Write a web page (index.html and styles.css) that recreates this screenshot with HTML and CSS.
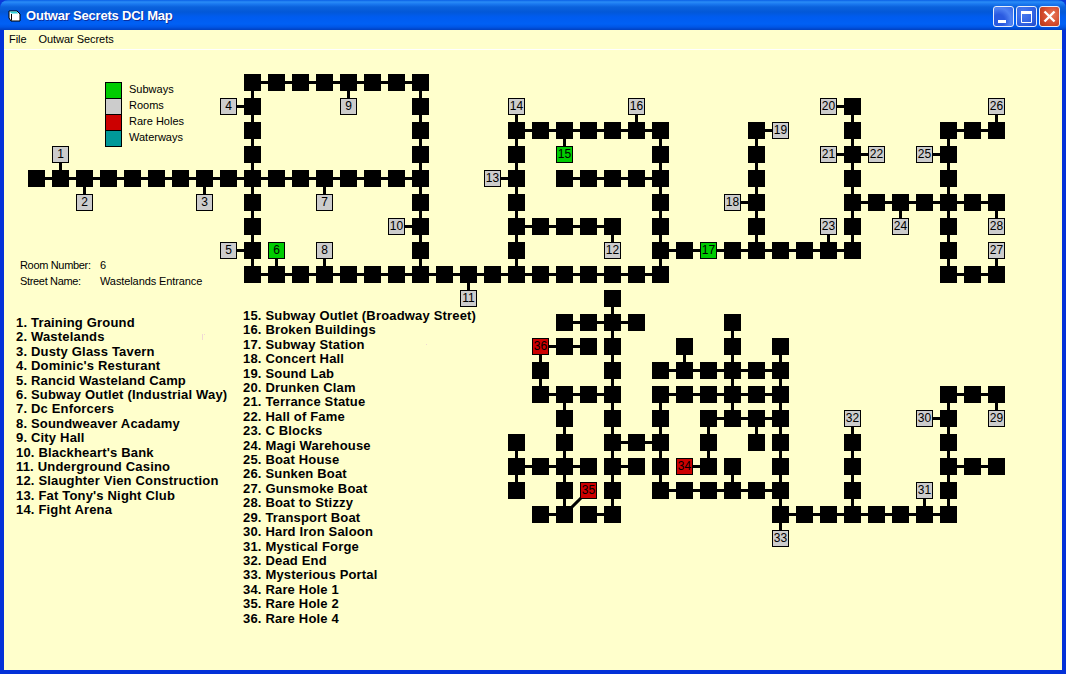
FILE: index.html
```html
<!DOCTYPE html>
<html lang="en">
<head>
<meta charset="utf-8">
<title>Outwar Secrets DCI Map</title>
<link rel="stylesheet" href="styles.css">
</head>
<body>
<div class="window">
  <header class="titlebar">
    <svg class="app-icon" width="13" height="12" viewBox="0 0 13 12">
      <path d="M1 1h8l3 3v7H3L1 8z" fill="#fff" stroke="#000"/>
      <path d="M1.500 1.500h7l2 2h-7z" fill="#2fd0d8"/>
      <path d="M3.500 4v6.500" stroke="#000"/>
    </svg>
    <span class="title">Outwar Secrets DCI Map</span>
    <div class="controls">
      <button class="ctl ctl-min" aria-label="Minimize"><svg width="19" height="19" viewBox="0 0 19 19"><path d="M4 13h8v3H4z" fill="#fff"/></svg></button>
      <button class="ctl ctl-max" aria-label="Maximize"><svg width="19" height="19" viewBox="0 0 19 19"><path d="M4.500 5.500h10v10h-10z" fill="none" stroke="#fff"/><path d="M4 4h11v3H4z" fill="#fff"/></svg></button>
      <button class="ctl ctl-close" aria-label="Close"><svg width="19" height="19" viewBox="0 0 19 19"><path d="M4.500 4.500l10 10M14.500 4.500l-10 10" stroke="#fff" stroke-width="2.400"/></svg></button>
    </div>
  </header>
  <nav class="menubar">
    <span class="menu-item">File</span>
    <span class="menu-item">Outwar Secrets</span>
  </nav>
  <main class="client">
    <svg id="map" class="map" width="1058" height="640" viewBox="4 30 1058 640"></svg>
    <div class="panel">
      <ul class="legend">
        <li class="legend-row"><span class="swatch sw-subway"></span>Subways</li>
        <li class="legend-row"><span class="swatch sw-room"></span>Rooms</li>
        <li class="legend-row"><span class="swatch sw-rare"></span>Rare Holes</li>
        <li class="legend-row"><span class="swatch sw-water"></span>Waterways</li>
      </ul>
      <dl class="info">
        <div class="info-row"><dt>Room Number:</dt><dd>6</dd></div>
        <div class="info-row"><dt>Street Name:</dt><dd>Wastelands Entrance</dd></div>
      </dl>
      <div class="lists">
        <ol class="places places-a">
          <li>1. Training Ground</li>
          <li>2. Wastelands</li>
          <li>3. Dusty Glass Tavern</li>
          <li>4. Dominic's Resturant</li>
          <li>5. Rancid Wasteland Camp</li>
          <li>6. Subway Outlet (Industrial Way)</li>
          <li>7. Dc Enforcers</li>
          <li>8. Soundweaver Acadamy</li>
          <li>9. City Hall</li>
          <li>10. Blackheart's Bank</li>
          <li>11. Underground Casino</li>
          <li>12. Slaughter Vien Construction</li>
          <li>13. Fat Tony's Night Club</li>
          <li>14. Fight Arena</li>
        </ol>
        <ol class="places places-b">
          <li>15. Subway Outlet (Broadway Street)</li>
          <li>16. Broken Buildings</li>
          <li>17. Subway Station</li>
          <li>18. Concert Hall</li>
          <li>19. Sound Lab</li>
          <li>20. Drunken Clam</li>
          <li>21. Terrance Statue</li>
          <li>22. Hall of Fame</li>
          <li>23. C Blocks</li>
          <li>24. Magi Warehouse</li>
          <li>25. Boat House</li>
          <li>26. Sunken Boat</li>
          <li>27. Gunsmoke Boat</li>
          <li>28. Boat to Stizzy</li>
          <li>29. Transport Boat</li>
          <li>30. Hard Iron Saloon</li>
          <li>31. Mystical Forge</li>
          <li>32. Dead End</li>
          <li>33. Mysterious Portal</li>
          <li>34. Rare Hole 1</li>
          <li>35. Rare Hole 2</li>
          <li>36. Rare Hole 4</li>
        </ol>
      </div>
    </div>
  </main>
</div>
<script src="script.js"></script>
</body>
</html>
```
FILE: styles.css
```css
* { box-sizing: border-box; }
html, body { margin: 0; padding: 0; height: 100%; }
body { width: 1066px; height: 674px; overflow: hidden; background: #0a3ad8; }

.window {
  width: 1066px; height: 674px;
  display: flex; flex-direction: column;
  border-radius: 8px 8px 0 0;
  overflow: hidden;
  background: #0331d8;
}

.titlebar {
  height: 30px; flex: none;
  display: flex; align-items: center;
  padding: 0 6px 0 8px;
  background: linear-gradient(180deg,
    #0a5fe6 0, #2a8cf6 2px, #1a78f0 4px, #0b62dc 7px, #0358d8 12px,
    #005cf0 17px, #0060f5 24px, #0056e6 27px, #0040c0 30px);
}
.app-icon { flex: none; margin-top: 1px; }
.title {
  margin-left: 5px; margin-top: 1px;
  font: bold 13px/16px "Liberation Sans", Arial, sans-serif;
  letter-spacing: -.2px;
  color: #fff;
  text-shadow: 1px 1px 0 #0a2fa0;
}
.controls { margin-left: auto; display: flex; gap: 2px; margin-top: 3px; }
.ctl {
  width: 21px; height: 21px; padding: 0;
  display: flex; align-items: center; justify-content: center;
  border: 1px solid #e6eefc; border-radius: 3px;
  background: radial-gradient(circle at 30% 30%, #4a7cf0, #2f5fe0 65%, #1f48c8);
}
.ctl svg { display: block; }
.ctl-min { background: radial-gradient(circle at 25% 70%, #2a5ae0 30%, #4f82f2 62%, #3566e6); }
.ctl-close { background: radial-gradient(circle at 65% 40%, #e8785a, #d2482a 60%, #b03818); }

.menubar {
  height: 20px; flex: none;
  margin: 0 4px;
  padding: 0 0 1px 5px;
  display: flex; align-items: center; gap: 12px;
  background: #ffffcc;
  border-bottom: 1px solid #fff;
  font: 11px/14px "Liberation Sans", Arial, sans-serif;
  letter-spacing: -.05px;
  color: #000;
}

.client {
  flex: none; width: 1058px; height: 620px;
  margin: 0 4px;
  display: grid;
  background: #ffffcc;
  overflow: hidden;
}
.map { grid-area: 1 / 1; margin-top: -20px; display: block; }
.map .node { fill: #000; }
.map .link { stroke: #000; stroke-width: 3; fill: none; }
.map .room { stroke: #000; stroke-width: 1; }
.map .room-grey { fill: #cccccc; }
.map .room-green { fill: #00cc00; }
.map .room-red { fill: #cc0000; }
.map .speck { fill: #f0d8d4; }
.map .room-num {
  font: 12px "Liberation Sans", Arial, sans-serif;
  fill: #000; text-anchor: middle;
}

.panel {
  grid-area: 1 / 1;
  display: flex; flex-direction: column;
  pointer-events: none;
  font-family: "Liberation Sans", Arial, sans-serif;
  color: #000;
}

.legend { list-style: none; margin: 32px 0 0 101px; padding: 0; }
.legend-row {
  display: flex; align-items: flex-start; height: 16px;
  font-size: 11px; line-height: 14px;
}
.swatch {
  width: 17px; height: 17px; flex: none;
  border: 1px solid #000;
  margin-right: 7px;
}
.sw-subway { background: #00cc00; }
.sw-room { background: #cccccc; }
.sw-rare { background: #cc0000; }
.sw-water { background: #009999; }

.info { margin: 111px 0 0 16px; font-size: 11px; line-height: 16px; }
.info-row { display: flex; }
.info dt { width: 80px; letter-spacing: -.33px; }
.info dd { margin: 0; letter-spacing: -.1px; }

.lists { display: flex; align-items: flex-start; margin-top: 20px; padding-left: 12px; }
.places {
  list-style: none; margin: 0; padding: 0;
  font-family: "Liberation Sans", Arial, sans-serif;
  font-weight: bold; font-size: 13px; line-height: 14.4px;
  letter-spacing: .18px;
  white-space: nowrap;
}
.places-a { width: 227px; margin-top: 7px; }
```
FILE: script.js
```js
// Grid: 24px pitch, 17px nodes. Runs are [r1, c1, r2, c2] of connected nodes.
var runs = [
  [0,9,0,16],[0,9,8,9],[0,16,8,16],[4,0,4,16],[8,9,8,26],
  [2,20,2,26],[2,20,8,20],[4,22,4,26],[6,20,6,24],[2,26,8,26],
  [7,26,7,34],[2,30,7,30],[1,34,7,34],[5,34,5,40],[2,38,8,38],[2,38,2,40],[8,38,8,40],
  [9,24,18,24],[10,22,10,25],[11,21,11,23],[11,21,13,21],[13,21,13,24],[13,22,18,22],
  [16,20,16,23],[15,20,17,20],[18,21,18,22],[18,23,18,24],
  [15,24,15,26],[16,24,16,25],[13,26,17,26],[12,26,12,31],[13,26,13,31],
  [11,27,12,27],[10,29,14,29],[11,31,18,31],[14,28,14,31],[14,28,16,28],[14,30,15,30],
  [17,26,17,31],[16,29,17,29],[18,31,18,38],[14,34,18,34],[13,38,18,38],[13,38,13,40],[16,38,16,40]
];
// Labelled rooms: [number, row, col, attached row, attached col, colour]
var rooms = [
  [1,3,1,4,1],[2,5,2,4,2],[3,5,7,4,7],[4,1,8,1,9],[5,7,8,7,9],[6,7,10,8,10,"green"],[7,5,12,4,12],[8,7,12,8,12],
  [9,1,13,0,13],[10,6,15,6,16],[11,9,18,8,18],[12,7,24,6,24],[13,4,19,4,20],[14,1,20,2,20],[15,3,22,2,22,"green"],
  [16,1,25,2,25],[17,7,28,7,28,"green"],[18,5,29,5,30],[19,2,31,2,30],[20,1,33,1,34],[21,3,33,3,34],[22,3,35,3,34],
  [23,6,33,7,33],[24,6,36,5,36],[25,3,37,3,38],[26,1,40,2,40],[27,7,40,8,40],[28,6,40,5,40],[29,14,40,13,40],
  [30,14,37,14,38],[31,17,37,18,37],[32,14,34,15,34],[33,19,31,18,31],[34,16,27,16,28,"red"],[35,17,23,18,22,"red"],[36,11,21,11,22,"red"]
];
var NS = "http://www.w3.org/2000/svg";
var map = document.getElementById("map");
function X(c) { return 28 + 24 * c; }
function Y(r) { return 74 + 24 * r; }
function el(name, attrs, text) {
  var e = document.createElementNS(NS, name);
  for (var k in attrs) e.setAttribute(k, attrs[k]);
  if (text !== undefined) e.textContent = text;
  map.appendChild(e);
  return e;
}
function link(r1, c1, r2, c2) {
  el("line", { "class": "link", x1: X(c1) + 8.5, y1: Y(r1) + 8.5, x2: X(c2) + 8.5, y2: Y(r2) + 8.5 });
}
var cells = {};
runs.forEach(function (u) {
  link(u[0], u[1], u[2], u[3]);
  for (var r = u[0]; r <= u[2]; r++) for (var c = u[1]; c <= u[3]; c++) cells[r + "," + c] = 1;
});
rooms.forEach(function (m) { link(m[1], m[2], m[3], m[4]); });
Object.keys(cells).forEach(function (k) {
  var p = k.split(",");
  el("rect", { "class": "node", x: X(+p[1]), y: Y(+p[0]), width: 17, height: 17 });
});
rooms.forEach(function (m) {
  el("rect", { "class": "room room-" + (m[5] || "grey"), x: X(m[2]) + 0.5, y: Y(m[1]) + 0.5, width: 16, height: 16 });
  el("text", { "class": "room-num", x: X(m[2]) + 8.5, y: Y(m[1]) + 12 }, m[0]);
});
// Faint stray marks present in the original capture
[[202,334,1,6],[204,334,1,1],[426,344,1,1]].forEach(function (s) {
  el("rect", { "class": "speck", x: s[0], y: s[1], width: s[2], height: s[3] });
});
```
